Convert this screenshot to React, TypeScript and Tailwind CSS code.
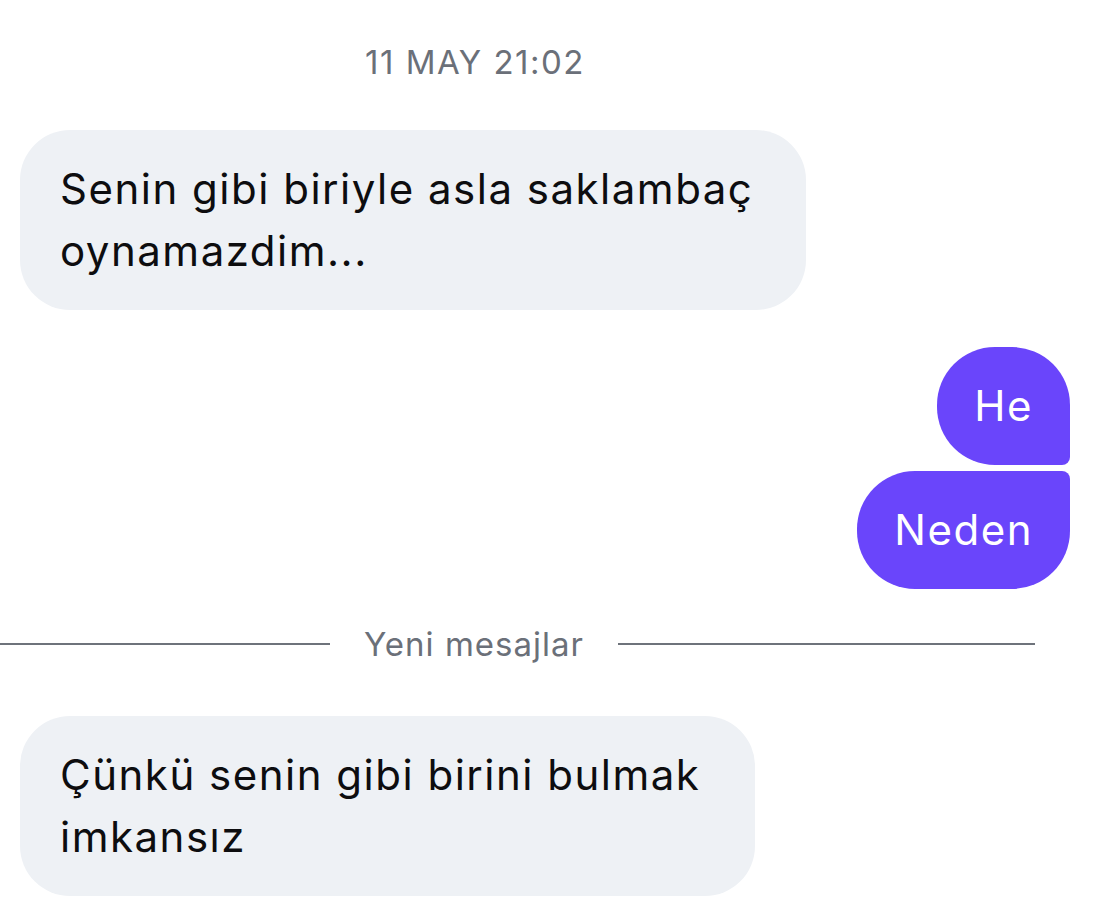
const Bubble = ({
  side,
  className,
  children,
}: {
  side: "in" | "out";
  className?: string;
  children: React.ReactNode;
}) => {
  const base =
    side === "in"
      ? "bg-[#eef1f5] text-[#0d0d0f]"
      : "bg-[#6a45fb] text-white";
  return (
    <div
      className={`${base} py-[28px] text-[42px] leading-[62px] tracking-[1.5px] ${className ?? ""}`}
    >
      {children}
    </div>
  );
};

export default function App() {
  return (
    <div className="w-[1094px] h-[913px] bg-white overflow-hidden font-['Inter','Noto_Sans',sans-serif]">
      <div className="w-[950px] pt-[42px] text-center text-[33px] leading-[40px] tracking-[1.5px] text-[#6b7079]">
        11 MAY 21:02
      </div>

      <div className="mt-[48px] ml-[20px]">
        <Bubble side="in" className="w-[786px] pl-10 pr-10 rounded-[50px]">
          Senin gibi biriyle asla saklambaç oynamazdim...
        </Bubble>
      </div>

      <div className="flex flex-col items-end pr-[24px]">
        <Bubble
          side="out"
          className="mt-[37px] px-[37px] rounded-[58px] rounded-br-[8px]"
        >
          He
        </Bubble>
        <Bubble
          side="out"
          className="mt-[6px] px-[37px] rounded-[58px] rounded-tr-[8px]"
        >
          Neden
        </Bubble>
      </div>

      <div className="mt-[35px] h-[40px] flex items-center pr-[59px]">
        <div className="w-[330px] h-[2px] bg-[#6e737b]" />
        <span className="px-[34px] text-[33px] leading-[40px] tracking-[1px] text-[#6b7079] whitespace-nowrap">
          Yeni mesajlar
        </span>
        <div className="flex-1 h-[2px] bg-[#6e737b]" />
      </div>

      <div className="mt-[52px] ml-[20px]">
        <Bubble side="in" className="w-[735px] pl-10 pr-10 rounded-[50px]">
          Çünkü senin gibi birini bulmak imkansız
        </Bubble>
      </div>
    </div>
  );
}
